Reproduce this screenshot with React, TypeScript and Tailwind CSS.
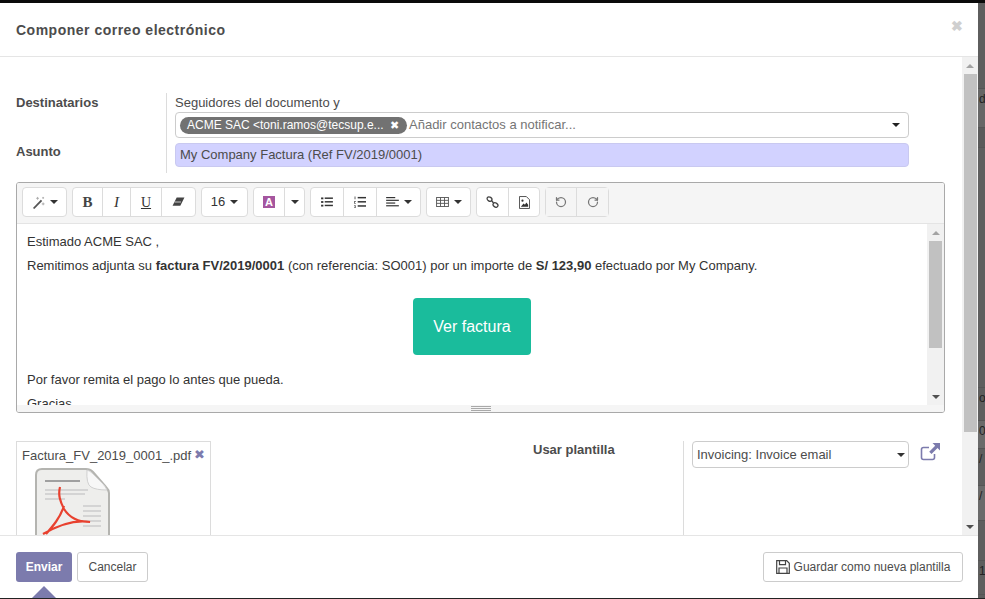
import { RotateCcw, RotateCw } from 'lucide-react';
import type { ReactNode } from 'react';

const Caret = ({ className = 'border-t-[#333]' }: { className?: string }) => (
  <span className={`inline-block w-0 h-0 border-x-4 border-x-transparent border-t-4 ${className}`} />
);

const Group = ({ children }: { children: ReactNode }) => (
  <div className="flex h-[30px] rounded-[4px] border border-[#dcdcdc] bg-white divide-x divide-[#dcdcdc] text-[#333]">
    {children}
  </div>
);

const Btn = ({ w, children, muted }: { w: string; children: ReactNode; muted?: boolean }) => (
  <div className={`flex items-center justify-center gap-[5px] ${w} ${muted ? 'bg-[#f5f5f5] text-[#777]' : ''}`}>{children}</div>
);

const Wand = () => (
  <svg width="13" height="13" viewBox="0 0 14 14">
    <path d="M1 13 9.500 4l1.500 1.500L2.500 14z" fill="#555" />
    <path d="M6 1v3M4.500 2.500h3M12 7v3M10.500 8.500h3M12 1v2M11 2h2" stroke="#aaa" strokeWidth="1" />
  </svg>
);

const Eraser = () => (
  <svg width="13" height="10" viewBox="0 0 14 11">
    <path d="M5 .5h8.500L9 9.500H.5z" fill="#444" />
    <path d="M2.700 5.500h7" stroke="#fff" strokeWidth="0.800" />
  </svg>
);

const ListUl = () => (
  <svg width="12" height="10" viewBox="0 0 13 11" fill="#333">
    <rect x="0" y="0.500" width="2.500" height="2" />
    <rect x="0" y="4.500" width="2.500" height="2" />
    <rect x="0" y="8.500" width="2.500" height="2" />
    <rect x="4" y="0.500" width="9" height="1.600" />
    <rect x="4" y="4.500" width="9" height="1.600" />
    <rect x="4" y="8.500" width="9" height="1.600" />
  </svg>
);

const ListOl = () => (
  <svg width="12" height="12" viewBox="0 0 13 13" fill="#333">
    <rect x="4" y="1" width="9" height="1.600" />
    <rect x="4" y="5.500" width="9" height="1.600" />
    <rect x="4" y="10" width="9" height="1.600" />
    <path d="M0.500 0.500h1.200v3H0.500zM0 5.500h2v1H1v1h1v.8H0zM0 10h2v3H0v-.7h1V12H.5v-.6H1V10.700H0z" opacity="0.700" />
  </svg>
);

const AlignLeft = () => (
  <svg width="13" height="10" viewBox="0 0 14 11" fill="#333">
    <rect x="0" y="0" width="10" height="1.300" />
    <rect x="0" y="3" width="14" height="1.300" />
    <rect x="0" y="6" width="10" height="1.300" />
    <rect x="0" y="9" width="14" height="1.300" />
  </svg>
);

const TableIcon = () => (
  <svg width="13" height="10" viewBox="0 0 14 11" fill="none" stroke="#555" strokeWidth="1">
    <rect x="0.500" y="0.500" width="13" height="10" />
    <path d="M0.500 3.700h13M0.500 7h13M4.800 0.500v10M9.200 0.500v10" />
  </svg>
);

const LinkIcon = () => (
  <svg width="13" height="12" viewBox="0 0 13 12" fill="none" stroke="#444" strokeWidth="1.300">
    <ellipse cx="3.500" cy="3" rx="2.600" ry="2" transform="rotate(35 3.500 3)" />
    <ellipse cx="9.500" cy="9" rx="2.600" ry="2" transform="rotate(35 9.500 9)" />
    <path d="M5.500 4.500l2 2.500" />
  </svg>
);

const PictureFile = () => (
  <svg width="11" height="13" viewBox="0 0 12 14">
    <path d="M.5.500h7.500l3.500 3.500v9.500H.5z" fill="#fff" stroke="#444" />
    <circle cx="3.800" cy="5" r="1.200" fill="#333" />
    <path d="M2 11.500l3-3.500 1.500 1.500L8 7l2 2.500v2z" fill="#333" />
  </svg>
);

const FloppyIcon = () => (
  <svg width="14" height="14" viewBox="0 0 14 14" fill="none" stroke="#444" strokeWidth="1.200">
    <path d="M.7.700h10l2.600 2.600v10H.7z" />
    <path d="M3.500.700v4h6v-4M3 13.300V8h8v5.300" />
  </svg>
);

const ShareSquare = () => (
  <svg width="20" height="18" viewBox="0 0 20 18" fill="none" className="ml-[11px] mt-[2px]">
    <path d="M14.500 11v3.500q0 2-2 2H3.500q-2 0-2-2V6.500q0-2 2-2H9" stroke="#7c7bad" strokeWidth="1.600" />
    <path d="M12.500 0H20v7.500l-2.500-2.500-6 6-2.300-2.300 6-6z" fill="#7c7bad" />
  </svg>
);

const PdfThumb = () => (
  <svg width="76" height="70" viewBox="0 0 76 70" className="block">
    <path d="M2 7q0-6 6-6h44q4 0 7 3l13 15q3 3 3 6v45H2z" fill="#eeeeec" stroke="#b4b4b0" strokeWidth="2" />
    <path d="M53 2q-1 14 4 17t16 3q-2-4-4-6L58 5q-2-2-5-3z" fill="#f7f7f7" stroke="#d0d0d0" />
    <path d="M11 13h35" stroke="#a0a0a0" strokeWidth="2" />
    <path d="M11 22h43M11 26h40M11 31h20M49 38h18M49 43h18M49 48h18M49 53h18M49 58h18" stroke="#cccccc" strokeWidth="1.300" />
    <path d="M26 19c-2 8 0 14 4 22 5 8 12 13 26 13-12-2-28 1-47 12M30 38C26 50 19 58 12 66" fill="none" stroke="#e8412f" strokeWidth="2.200" />
  </svg>
);

const StripCell = ({ h, text, tone = 'bg-[#5e5e5e]' }: { h: string; text?: string; tone?: string }) => (
  <div className={`${h} pl-px overflow-hidden border-b border-[#555] text-[#222] ${tone}`}>{text}</div>
);

const Scrollbar = ({ thumbH, width, thumbW }: { thumbH: string; width: string; thumbW: string }) => (
  <div className={`${width} shrink-0 bg-[#f1f1f1] flex flex-col items-center`}>
    <div className="h-[17px] flex items-center justify-center">
      <span className="w-0 h-0 border-x-4 border-x-transparent border-b-4 border-b-[#a3a3a3]" />
    </div>
    <div className={`${thumbW} ${thumbH} bg-[#c1c1c1]`} />
    <div className="flex-1" />
    <div className="h-[17px] flex items-center justify-center">
      <span className="w-0 h-0 border-x-4 border-x-transparent border-t-4 border-t-[#505050]" />
    </div>
  </div>
);

export default function App() {
  return (
    <div className="w-[985px] h-[599px] overflow-hidden bg-black flex flex-col text-[13px] text-[#4c4c4c]" style={{ fontFamily: '"Liberation Sans", Arial, sans-serif' }}>
      <div className="h-[3px] shrink-0 bg-[#0a0a0a]" />
      <div className="flex h-[595px] shrink-0">
        {/* modal */}
        <div className="w-[978px] shrink-0 flex flex-col bg-white">
          <div className="h-[54px] shrink-0 border-b border-[#e5e5e5] flex justify-between pl-4 pr-[15px]">
            <h4 className="mt-[19px] text-[14px] leading-[17px] font-bold tracking-[0.5px] text-[#4c4c4c]">Componer correo electrónico</h4>
            <span className="mt-[15px] text-[14px] leading-[16px] font-bold text-[#cfcfcf]">✖</span>
          </div>

          <div className="h-[478px] shrink-0 flex overflow-hidden">
            <div className="w-[962px] shrink-0 pl-4 pt-[36px] overflow-hidden">
              {/* recipients + subject */}
              <div className="flex h-[80px]">
                <div className="w-[150px] shrink-0 flex flex-col font-bold">
                  <span className="mt-px leading-[18px] h-[49px]">Destinatarios</span>
                  <span className="leading-[18px]">Asunto</span>
                </div>
                <div className="w-[743px] shrink-0 border-l border-[#dcdcdc] pl-2">
                  <div className="leading-[17px] mt-[1px]">Seguidores del documento y</div>
                  <div className="h-[26px] mt-[1px] w-[734px] border border-[#ccc] rounded-[4px] flex items-center pl-1 pr-[8px]">
                    <div className="h-[17px] w-[227px] shrink-0 rounded-full bg-[#727272] text-white flex items-center justify-between pl-[7px] pr-2 text-[12px] leading-none whitespace-nowrap overflow-hidden">
                      <span className="font-medium">ACME SAC &lt;toni.ramos@tecsup.e...</span>
                      <span className="text-[11px]">✖</span>
                    </div>
                    <span className="ml-[2px] text-[#757575] flex-1">Añadir contactos a notificar...</span>
                    <Caret className="border-t-[#222]" />
                  </div>
                  <div className="h-[24px] mt-[5px] w-[734px] rounded-[4px] bg-[#d2d2ff] border border-[#c9c9f0] flex items-center pl-1 text-[#4c4c4c]">
                    My Company Factura (Ref FV/2019/0001)
                  </div>
                </div>
              </div>

              {/* editor */}
              <div className="mt-[9px] w-[929px] h-[231px] border border-[#a9a9a9] rounded-[3px] flex flex-col overflow-hidden">
                <div className="h-[41px] shrink-0 bg-[#f5f5f5] border-b border-[#e4e4e4] flex items-start pt-[4px] pl-[5px] gap-[5px]">
                  <Group><Btn w="w-[43px]"><Wand /><Caret /></Btn></Group>
                  <Group>
                    <Btn w="w-[30px]"><span className="font-bold text-[15px] text-[#444]" style={{ fontFamily: '"Liberation Serif", serif' }}>B</span></Btn>
                    <Btn w="w-[28px]"><span className="italic text-[15px]" style={{ fontFamily: '"Liberation Serif", serif' }}>I</span></Btn>
                    <Btn w="w-[31px]"><span className="underline text-[14px]" style={{ fontFamily: '"Liberation Serif", serif' }}>U</span></Btn>
                    <Btn w="w-[33px]"><Eraser /></Btn>
                  </Group>
                  <Group><Btn w="w-[45px]"><span>16</span><Caret /></Btn></Group>
                  <Group>
                    <Btn w="w-[31px]"><span className="w-3 h-3 bg-[#a5569f] text-white text-[11px] leading-3 font-bold text-center">A</span></Btn>
                    <Btn w="w-[19px]"><Caret /></Btn>
                  </Group>
                  <Group>
                    <Btn w="w-[33px]"><ListUl /></Btn>
                    <Btn w="w-[33px]"><ListOl /></Btn>
                    <Btn w="w-[43px]"><AlignLeft /><Caret /></Btn>
                  </Group>
                  <Group><Btn w="w-[43px]"><TableIcon /><Caret /></Btn></Group>
                  <Group>
                    <Btn w="w-[32px]"><LinkIcon /></Btn>
                    <Btn w="w-[30px]"><PictureFile /></Btn>
                  </Group>
                  <Group>
                    <Btn w="w-[31px]" muted><RotateCcw size={12} strokeWidth={2.500} /></Btn>
                    <Btn w="w-[31px]" muted><RotateCw size={12} strokeWidth={2.500} /></Btn>
                  </Group>
                </div>
                <div className="h-[181px] shrink-0 flex overflow-hidden">
                  <div className="flex-1 pl-[10px] pt-[9px] text-[#333] overflow-hidden">
                    <p className="leading-[18px]">Estimado ACME SAC ,</p>
                    <p className="mt-[6px] leading-[18px]">
                      Remitimos adjunta su <b>factura FV/2019/0001</b> (con referencia: SO001) por un importe de <b>S/ 123,90</b> efectuado por My Company.
                    </p>
                    <div className="mt-[23px] flex justify-center pr-[10px]">
                      <div className="w-[118px] h-[57px] rounded-[4px] bg-[#1abc9c] text-white text-[16px] flex items-center justify-center">Ver factura</div>
                    </div>
                    <p className="mt-[16px] leading-[18px]">Por favor remita el pago lo antes que pueda.</p>
                    <p className="mt-[6px] leading-[18px]">Gracias,</p>
                  </div>
                  <Scrollbar width="w-[17px]" thumbW="w-[13px]" thumbH="h-[107px]" />
                </div>
                <div className="h-[7px] shrink-0 bg-[#f5f5f5] flex flex-col items-center justify-center gap-px">
                  <span className="w-5 h-px bg-[#a9a9a9]" />
                  <span className="w-5 h-px bg-[#a9a9a9]" />
                  <span className="w-5 h-px bg-[#a9a9a9]" />
                </div>
              </div>

              {/* attachments + template */}
              <div className="mt-[28px] flex h-[100px]">
                <div className="w-[195px] h-[110px] shrink-0 border border-[#dcdcdc] pl-[5px] pt-[4px]">
                  <div className="flex items-start gap-[3px] leading-[20px] whitespace-nowrap">
                    <span>Factura_FV_2019_0001_.pdf</span>
                    <span className="text-[#7c7bad] text-[13px] leading-[17px]">✖</span>
                  </div>
                  <div className="ml-[12px] mt-[2px]"><PdfThumb /></div>
                </div>
                <div className="w-[322px] shrink-0 pl-[322px] font-bold whitespace-nowrap leading-[18px]">Usar plantilla</div>
                <div className="ml-[150px] border-l border-[#dcdcdc] pl-2 h-[110px] flex items-start">
                  <div className="w-[217px] h-[27px] border border-[#ccc] rounded-[4px] flex items-center justify-between pl-[4px] pr-[3px] text-[#4c4c4c]">
                    <span>Invoicing: Invoice email</span>
                    <Caret />
                  </div>
                  <ShareSquare />
                </div>
              </div>
            </div>
            <Scrollbar width="w-[16px]" thumbW="w-[13px]" thumbH="h-[358px]" />
          </div>

          <div className="flex-1 border-t border-[#e5e5e5] flex items-start justify-between pl-4 pr-[15px] pt-[16px] relative">
            <div className="flex gap-[5px]">
              <div className="w-[56px] h-[30px] rounded-[3px] bg-[#7c7bad] text-white font-bold flex items-center justify-center text-[12px]">Enviar</div>
              <div className="w-[71px] h-[30px] rounded-[3px] border border-[#ccc] flex items-center justify-center text-[12px]">Cancelar</div>
            </div>
            <div className="w-[200px] h-[30px] rounded-[3px] border border-[#ccc] flex items-center justify-center gap-[4px] text-[12px] text-[#4c4c4c]">
              <FloppyIcon />
              <span>Guardar como nueva plantilla</span>
            </div>
            <span className="absolute left-[32px] bottom-0 w-0 h-0 border-x-[12px] border-x-transparent border-b-[12px] border-b-[#7c7bad]" />
          </div>
        </div>

        {/* page behind the dialog */}
        <div className="w-[7px] shrink-0 flex flex-col bg-[#5e5e5e] text-[12px] leading-[20px] overflow-hidden">
          <StripCell h="h-[86px]" />
          <StripCell h="h-[39px]" text="d" tone="bg-[#666666]" />
          <StripCell h="h-[20px]" tone="bg-[#5a5a5a]" />
          <StripCell h="h-[240px]" />
          <StripCell h="h-[33px]" text="ot" />
          <StripCell h="h-[28px]" text="0" tone="bg-[#6a6a6a]" />
          <StripCell h="h-[37px]" text="/" />
          <StripCell h="h-[35px]" text="/" tone="bg-[#6a6a6a]" />
          <StripCell h="h-[40px]" />
          <StripCell h="h-[34px]" text="1" />
        </div>
      </div>
      <div className="h-px shrink-0 bg-[#222]" />
    </div>
  );
}
